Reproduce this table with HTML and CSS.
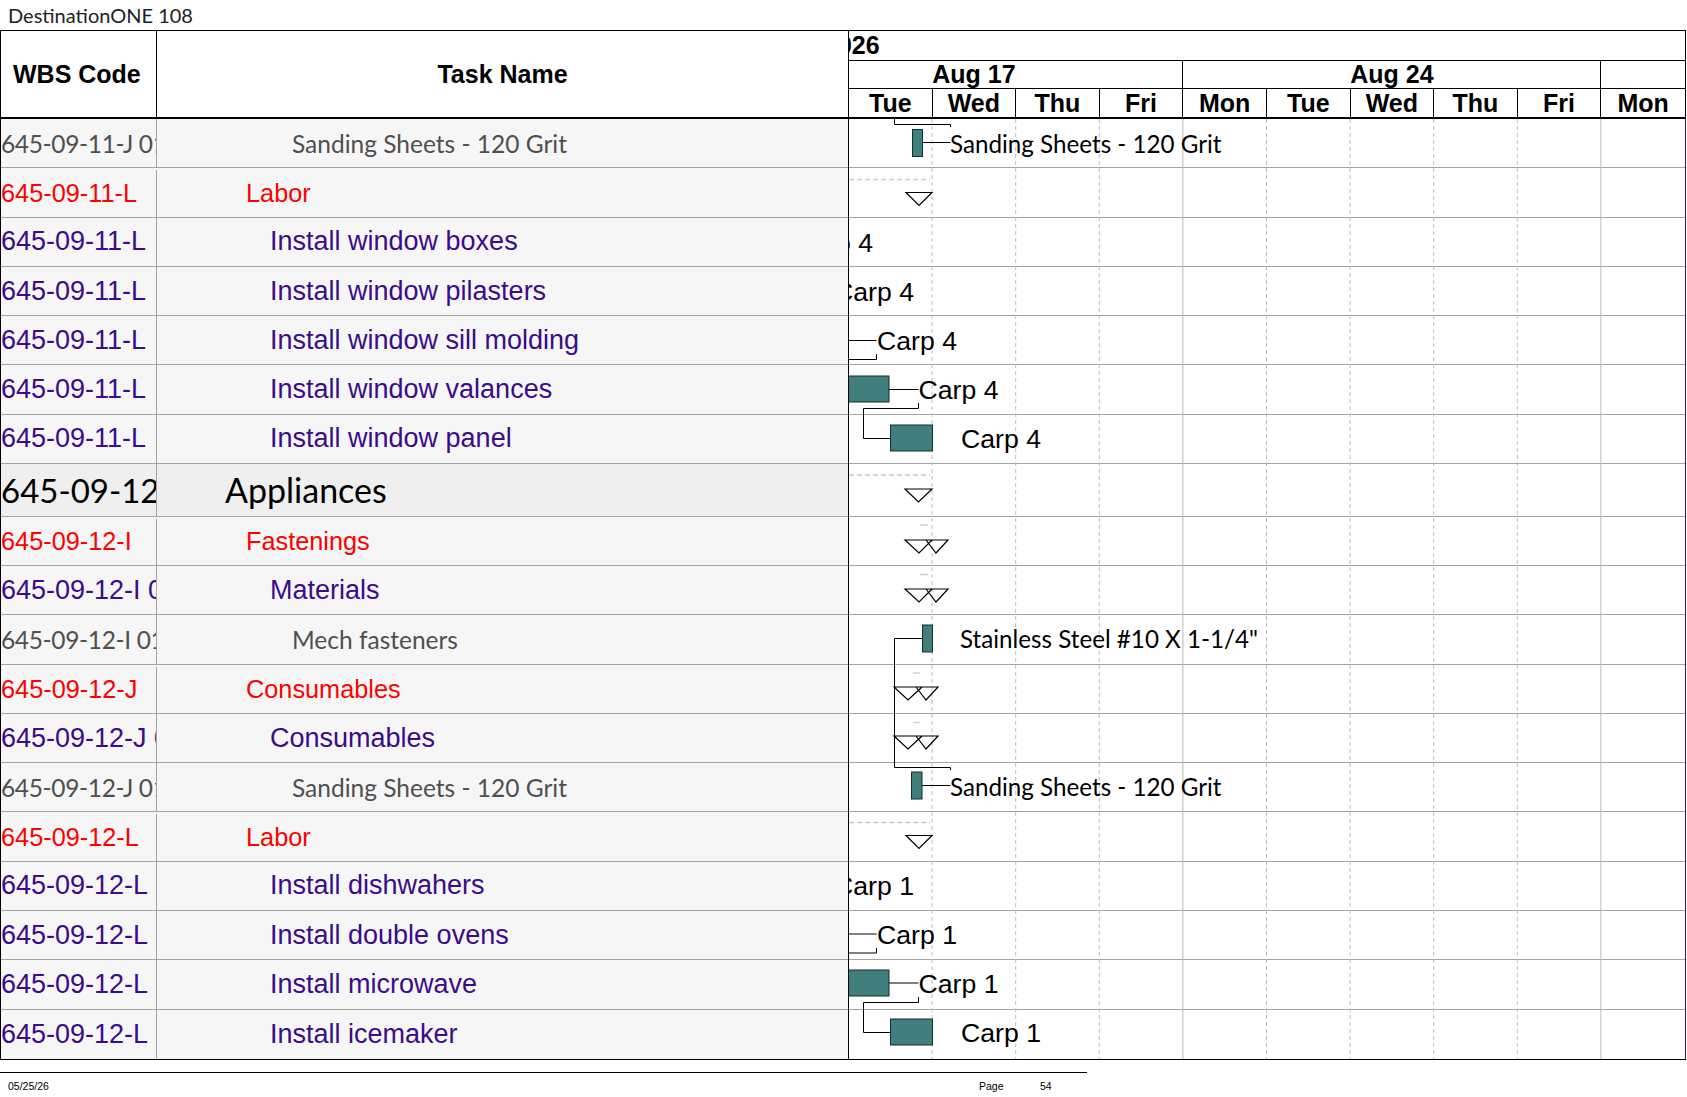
FILE: index.html
```html
<!DOCTYPE html>
<html>
<head>
<meta charset="utf-8">
<title>DestinationONE 108</title>
<link rel="stylesheet" href="styles.css">
</head>
<body>
<div class="doc-title">DestinationONE 108</div>
<div class="sheet">
  <div class="grid">
    <div class="thead">
      <div class="c-wbs">WBS Code</div>
      <div class="c-task">Task Name</div>
    </div>
    <div class="row note"><div class="c-wbs">645-09-11-J 01</div><div class="c-task ind-note">Sanding Sheets - 120 Grit</div></div>
    <div class="row sum"><div class="c-wbs">645-09-11-L</div><div class="c-task ind-sum">Labor</div></div>
    <div class="row task"><div class="c-wbs">645-09-11-L</div><div class="c-task ind-task">Install window boxes</div></div>
    <div class="row task"><div class="c-wbs">645-09-11-L</div><div class="c-task ind-task">Install window pilasters</div></div>
    <div class="row task"><div class="c-wbs">645-09-11-L</div><div class="c-task ind-task">Install window sill molding</div></div>
    <div class="row task"><div class="c-wbs">645-09-11-L</div><div class="c-task ind-task">Install window valances</div></div>
    <div class="row task"><div class="c-wbs">645-09-11-L</div><div class="c-task ind-task">Install window panel</div></div>
    <div class="row big"><div class="c-wbs">645-09-12</div><div class="c-task ind-grp">Appliances</div></div>
    <div class="row sum"><div class="c-wbs">645-09-12-I</div><div class="c-task ind-sum">Fastenings</div></div>
    <div class="row task"><div class="c-wbs">645-09-12-I 01</div><div class="c-task ind-task">Materials</div></div>
    <div class="row note"><div class="c-wbs">645-09-12-I 01</div><div class="c-task ind-note">Mech fasteners</div></div>
    <div class="row sum"><div class="c-wbs">645-09-12-J</div><div class="c-task ind-sum">Consumables</div></div>
    <div class="row task"><div class="c-wbs">645-09-12-J 01</div><div class="c-task ind-task">Consumables</div></div>
    <div class="row note"><div class="c-wbs">645-09-12-J 01</div><div class="c-task ind-note">Sanding Sheets - 120 Grit</div></div>
    <div class="row sum"><div class="c-wbs">645-09-12-L</div><div class="c-task ind-sum">Labor</div></div>
    <div class="row task"><div class="c-wbs">645-09-12-L</div><div class="c-task ind-task">Install dishwahers</div></div>
    <div class="row task"><div class="c-wbs">645-09-12-L</div><div class="c-task ind-task">Install double ovens</div></div>
    <div class="row task"><div class="c-wbs">645-09-12-L</div><div class="c-task ind-task">Install microwave</div></div>
    <div class="row task end"><div class="c-wbs">645-09-12-L</div><div class="c-task ind-task">Install icemaker</div></div>
  </div>
  <div class="gantt">
    <div class="tl-year"><span>2026</span></div>
    <div class="tl-weeks">
      <div class="wk first">Aug 17</div>
      <div class="wk">Aug 24</div>
      <div class="wk">Aug 31</div>
    </div>
    <div class="tl-days">
      <div class="day">Tue</div><div class="day">Wed</div><div class="day">Thu</div><div class="day">Fri</div><div class="day">Mon</div>
      <div class="day">Tue</div><div class="day">Wed</div><div class="day">Thu</div><div class="day">Fri</div><div class="day">Mon</div>
    </div>
    <div class="gbody">
      <div class="grow"></div><div class="grow"></div><div class="grow"></div><div class="grow"></div><div class="grow"></div>
      <div class="grow"></div><div class="grow"></div><div class="grow big"></div><div class="grow"></div><div class="grow"></div>
      <div class="grow"></div><div class="grow"></div><div class="grow"></div><div class="grow"></div><div class="grow"></div>
      <div class="grow"></div><div class="grow"></div><div class="grow"></div><div class="grow end"></div>
      <svg class="overlay" viewBox="0 0 836 940" width="836" height="940" xmlns="http://www.w3.org/2000/svg">
        <g class="vd">
          <line x1="83.1" y1="0" x2="83.1" y2="940"/>
          <line x1="166.7" y1="0" x2="166.7" y2="940"/>
          <line x1="250.3" y1="0" x2="250.3" y2="940"/>
          <line x1="417.5" y1="0" x2="417.5" y2="940"/>
          <line x1="501.1" y1="0" x2="501.1" y2="940"/>
          <line x1="584.7" y1="0" x2="584.7" y2="940"/>
          <line x1="668.3" y1="0" x2="668.3" y2="940"/>
        </g>
        <g class="vs">
          <line x1="333.9" y1="0" x2="333.9" y2="940"/>
          <line x1="751.9" y1="0" x2="751.9" y2="940"/>
        </g>
        <g class="sumline">
          <line x1="0" y1="60.5" x2="81" y2="60.5"/>
          <line x1="0" y1="356" x2="81" y2="356"/>
          <line x1="0" y1="703.5" x2="81" y2="703.5"/>
        </g>
        <g class="tick">
          <line x1="71" y1="406" x2="79" y2="406"/>
          <line x1="71" y1="455.5" x2="79" y2="455.5"/>
          <line x1="64" y1="554" x2="71" y2="554"/>
          <line x1="64" y1="603.5" x2="71" y2="603.5"/>
        </g>
        <g class="lk">
          <path d="M45.5,0 V5.5 H101.5 V8"/>
          <path d="M73.5,23.5 H101.5"/>
          <path d="M0,221.5 H27.5"/>
          <path d="M0,240.5 H27.5 V235"/>
          <path d="M40,270.5 H69.5"/>
          <path d="M69.5,284 V289.5 H14.5 V319.5 H41"/>
          <path d="M45.5,519.5 H73.5"/>
          <path d="M45.5,519.5 V648.5 H101.5 V651"/>
          <path d="M73,666.5 H101.5"/>
          <path d="M0,815 H27.5"/>
          <path d="M0,834 H27.5 V829"/>
          <path d="M40,864 H69.5"/>
          <path d="M69.5,878 V883.5 H14.5 V913.5 H41"/>
        </g>
        <g class="tri">
          <polygon points="57,73.5 83,73.5 70,86.5"/>
          <polygon points="56,370 83,370 69.5,383"/>
          <polygon points="57,716.5 83,716.5 70,729.5"/>
          <path d="M56,421 L70,434 L83,421 Z M77,421 L87,434 L99,421 Z"/>
          <path d="M56,470 L70,483 L83,470 Z M77,470 L87,483 L99,470 Z"/>
          <path d="M45,568 L59,581 L73,568 Z M67,568 L77,581 L89,568 Z"/>
          <path d="M45,617 L59,630 L73,617 Z M67,617 L77,630 L89,617 Z"/>
        </g>
        <g class="bar">
          <rect x="63.5" y="10.5" width="10" height="27"/>
          <rect x="-2" y="257" width="42" height="26"/>
          <rect x="41.5" y="306" width="42" height="26"/>
          <rect x="73.5" y="506" width="10" height="27"/>
          <rect x="62.5" y="653" width="10.5" height="27"/>
          <rect x="-2" y="851" width="42" height="26"/>
          <rect x="41.5" y="900" width="42" height="26"/>
        </g>
        <g class="tx-n">
          <text x="101" y="34">Sanding Sheets - 120 Grit</text>
          <text x="111" y="529">Stainless Steel #10 X 1-1/4"</text>
          <text x="101" y="677">Sanding Sheets - 120 Grit</text>
        </g>
        <g class="tx-c">
          <text x="-56" y="132.5">Carp 4</text>
          <text x="-15" y="181.75">Carp 4</text>
          <text x="28" y="230.5">Carp 4</text>
          <text x="69.5" y="279.5">Carp 4</text>
          <text x="112" y="329">Carp 4</text>
          <text x="-15" y="775.8">Carp 1</text>
          <text x="28" y="824.5">Carp 1</text>
          <text x="69.5" y="873.5">Carp 1</text>
          <text x="112" y="923">Carp 1</text>
        </g>
      </svg>
    </div>
  </div>
</div>
<div class="footer">
  <span class="f-date">05/25/26</span>
  <span class="f-page">Page</span>
  <span class="f-num">54</span>
</div>
</body>
</html>
```

FILE: styles.css
```css
* { box-sizing: border-box; }
html, body { margin: 0; padding: 0; background: #fff; }
body {
  width: 1687px;
  height: 1097px;
  overflow: hidden;
  font-family: "Liberation Sans", Arial, sans-serif;
  color: #000;
}

.doc-title {
  height: 30px;
  padding-left: 8px;
  font-family: Lato, "Noto Sans", sans-serif;
  font-size: 20px;
  line-height: 30px;
  color: #222;
}

.sheet {
  display: flex;
  width: 1686px;
  border-top: 1px solid #000;
  border-bottom: 1px solid #000;
}

/* ---------- left grid ---------- */
.grid {
  flex: 0 0 849px;
  width: 849px;
  border-left: 1px solid #000;
  border-right: 1px solid #000;
}
.thead {
  display: flex;
  height: 88px;
  border-bottom: 2px solid #000;
  background: #fff;
  font-weight: bold;
  font-size: 25px;
}
.thead .c-wbs {
  flex: 0 0 156px;
  display: flex;
  align-items: center;
  padding-left: 12px;
  border-right: 1px solid #000;
}
.thead .c-task {
  flex: 1;
  display: flex;
  align-items: center;
  justify-content: center;
}

.row {
  display: flex;
  height: 49.3px;
  border-bottom: 1px solid #a3a3a3;
  background: #f6f6f6;
}
.row.big { height: 52.6px; background: #efefef; }
.row.end { border-bottom: none; }
.row > div {
  display: flex;
  align-items: center;
  overflow: hidden;
  white-space: nowrap;
}
.row .c-wbs { flex: 0 0 156px; border-right: 1px solid #a3a3a3; }
.row .c-task { flex: 1; }

.row.note { font-family: Lato, "Noto Sans", sans-serif; font-size: 24.5px; color: #4f4f4f; }
.row.note .c-wbs { letter-spacing: -0.35px; }
.row.sum { font-size: 25.3px; color: #f00; padding-top: 2px; }
.row.task { font-size: 27px; color: #3a0c8c; }
.row.big { font-family: Lato, "Noto Sans", sans-serif; font-size: 34px; color: #000; }
.row.big .c-wbs { font-size: 33px; }

.ind-grp { padding-left: 68px; }
.ind-sum { padding-left: 89px; }
.ind-task { padding-left: 113px; }
.ind-note { padding-left: 135px; }

/* ---------- gantt ---------- */
.gantt {
  flex: 0 0 837px;
  width: 837px;
  display: flex;
  flex-direction: column;
  font-weight: bold;
  font-size: 25px;
}
.tl-year {
  height: 30px;
  display: flex;
  align-items: center;
  overflow: hidden;
  white-space: nowrap;
  border-bottom: 1px solid #000;
  border-right: 1px solid #000;
}
.tl-year span { margin-left: -25px; }
.tl-weeks {
  height: 28px;
  display: flex;
  overflow: hidden;
  border-bottom: 1px solid #000;
  border-right: 1px solid #000;
}
.wk {
  flex: 0 0 418px;
  display: flex;
  align-items: center;
  justify-content: center;
  border-right: 1px solid #000;
  white-space: nowrap;
}
.wk.first { margin-left: -83.6px; }
.tl-days {
  height: 30px;
  display: flex;
  border-bottom: 2px solid #000;
  border-right: 1px solid #000;
}
.day {
  flex: 0 0 83.6px;
  display: flex;
  align-items: center;
  justify-content: center;
  border-right: 1px solid #000;
}
.day:last-child { border-right: none; }

.gbody {
  position: relative;
  flex: 1;
  overflow: hidden;
  background: #fff;
  border-right: 1px solid #1c1c90;
}
.grow { height: 49.3px; border-bottom: 1px solid #a3a3a3; }
.grow.big { height: 52.6px; }
.grow.end { border-bottom: none; }

.overlay {
  position: absolute;
  left: 0;
  top: 0;
  overflow: hidden;
}
.vd line { stroke: #bdbdbd; stroke-width: 1; stroke-dasharray: 4 3; }
.vs line { stroke: #b8b8b8; stroke-width: 1; }
.sumline line { stroke: #cacaca; stroke-width: 1.5; stroke-dasharray: 5 3; }
.tick line { stroke: #d0d0d0; stroke-width: 1.5; }
.lk path { fill: none; stroke: #000; stroke-width: 1; }
.tri polygon, .tri path { fill: none; stroke: #000; stroke-width: 1.2; }
.bar rect { fill: #417f7d; stroke: #102f2e; stroke-width: 1; }
.tx-n text { font-family: Lato, "Noto Sans", sans-serif; font-size: 24.2px; font-weight: normal; fill: #000; }
.tx-c text { font-family: "Liberation Sans", Arial, sans-serif; font-size: 26.67px; font-weight: normal; fill: #000; }

/* ---------- footer ---------- */
.footer {
  display: flex;
  width: 1087px;
  margin-top: 12px;
  padding: 7px 0 0 8px;
  border-top: 1px solid #000;
  font-size: 10.5px;
  line-height: 13px;
}
.f-date { flex: 0 0 971px; }
.f-page { flex: 0 0 61px; }
```
